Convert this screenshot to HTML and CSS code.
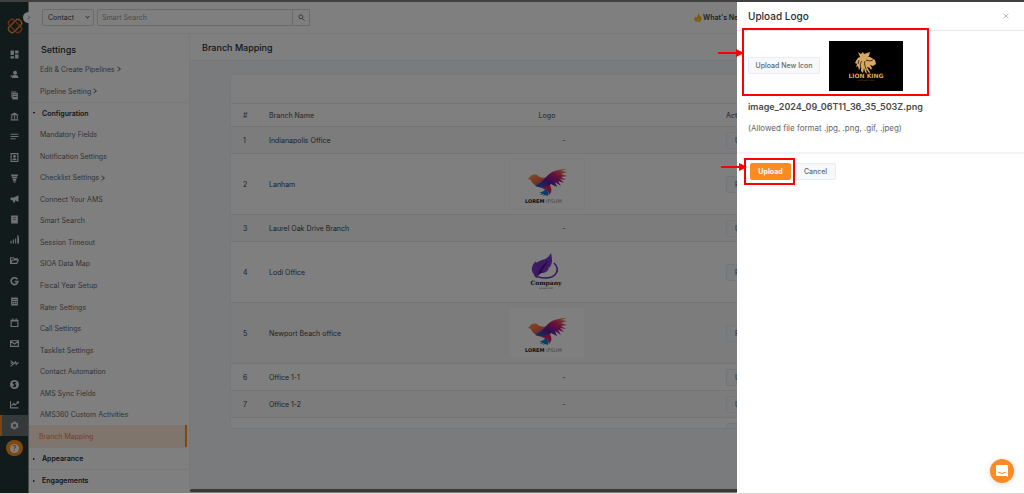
FILE: index.html
```html
<!DOCTYPE html>
<html lang="en">
<head>
    <meta charset="utf-8">
    <title>Branch Mapping</title>
    <link rel="stylesheet" href="styles.css">
</head>
<body>
    <svg class="defs" width="0" height="0">
        <defs>
            <linearGradient id="wing" x1="0" y1="1" x2="1" y2="0">
                <stop offset="0" stop-color="#0a6fd0"/>
                <stop offset="0.35" stop-color="#5a1fa0"/>
                <stop offset="0.65" stop-color="#d0207a"/>
                <stop offset="1" stop-color="#ffa030"/>
            </linearGradient>
            <linearGradient id="belly" x1="0" y1="0" x2="1" y2="1">
                <stop offset="0" stop-color="#ff9a3c"/>
                <stop offset="0.5" stop-color="#f06a50"/>
                <stop offset="1" stop-color="#2040b0"/>
            </linearGradient>
        </defs>
        <symbol id="bird" viewBox="0 0 74 50">
            <path fill="url(#belly)" d="M18 20l2-2c2-3 6-3 8-1 3 2 6 2 9 1l2 9-8 1c-5-1-9-3-10-7z"/>
            <path fill="url(#wing)" d="M25 27c4-2 8-5 12-10 5-5 11-7 20-7l-6 2 6 1-6 2 6 2-6 1 5 3-6-1 4 4-6-2 3 5-6-4 2 5-6-3c-3 4-8 5-16 2z"/>
            <path fill="#e01e5a" d="M32 28l8-2c2 4 2 7-1 10l-1-4-6-3z"/>
            <path fill="#0f7fd8" d="M36 29c2 3 3 5 2 8l-3-1-2 1 1-2-4 1 2-2-3 0c4-1 6-3 7-5z"/>
        </symbol>
    </svg>

    <div class="app">
        <aside class="sidebar">
            <a href="#" class="brand" aria-label="Home">
                <svg viewBox="0 0 16 16" fill="none" stroke-width="1.300">
                    <rect stroke="#f5a623" x="4.500" y="0.500" width="7" height="15" rx="3" transform="rotate(45 8 8)"/>
                    <rect stroke="#f0502a" x="4.500" y="0.500" width="7" height="15" rx="3" transform="rotate(-45 8 8)"/>
                </svg>
            </a>
            <nav class="side-nav">
                <a href="#" aria-label="Dashboard"><svg viewBox="0 0 16 16"><path d="M1 1h6v8H1zM9 1h6v5H9zM1 11h6v4H1zM9 8h6v7H9z"/></svg></a>
                <a href="#" aria-label="Contacts"><svg viewBox="0 0 16 16"><circle cx="9" cy="5" r="3.500"/><path d="M3 14c0-4 3-5 6-5s6 1 6 5zM1 13c0-3 1-4 3-4l-2 4z"/></svg></a>
                <a href="#" aria-label="Policies"><svg viewBox="0 0 16 16"><path d="M2 1h9v1H3v10H2zM4 3h10v12H4zm2 3v1h6V6zm0 3v1h6V9z" fill-rule="evenodd"/></svg></a>
                <a href="#" aria-label="Carriers"><svg viewBox="0 0 16 16"><path d="M8 1l7 4v1H1V5zM2 7h2v5H2zM7 7h2v5H7zM12 7h2v5h-2zM1 13h14v2H1z"/></svg></a>
                <a href="#" aria-label="Notes"><svg viewBox="0 0 16 16"><path d="M1 3h14v2H1zM1 7h14v2H1zM1 11h9v2H1z"/></svg></a>
                <a href="#" aria-label="Directory"><svg viewBox="0 0 16 16"><path fill-rule="evenodd" d="M1 0h14v16H1zM3 2v12h10V2z"/><circle cx="8" cy="6" r="2.500"/><path d="M4 13c0-5 8-5 8 0z"/></svg></a>
                <a href="#" aria-label="Pipeline"><svg viewBox="0 0 16 16"><path d="M2 1h12v3H2zM3 5h10l-1 3H4zM5 9h6v3H5zM6 13h4v2H6z"/></svg></a>
                <a href="#" aria-label="Campaigns"><svg viewBox="0 0 16 16"><path d="M1 6h6l8-4v12l-6-3v4H6l-1-4H1z"/></svg></a>
                <a href="#" aria-label="Documents"><svg viewBox="0 0 16 16"><path fill-rule="evenodd" d="M2 1h12v14H2zm3 3v1h6V4zm0 3v1h6V7z"/></svg></a>
                <a href="#" aria-label="Reports"><svg viewBox="0 0 16 16"><path d="M1 10h2v5H1zM5 8h2v7H5zM9 6h2v9H9zM13 4h3v11h-3z"/><circle cx="14" cy="2" r="1.500"/></svg></a>
                <a href="#" aria-label="Files"><svg viewBox="0 0 16 16" class="line"><path d="M1 13V3h5l2 2h5v2M1 13l3-6h11l-3 6z"/></svg></a>
                <a href="#" aria-label="Google"><svg viewBox="0 0 16 16" class="line google"><path d="M13 4A6 6 0 1 0 14 8H8"/></svg></a>
                <a href="#" aria-label="Calculator"><svg viewBox="0 0 16 16"><path fill-rule="evenodd" d="M2 1h12v14H2zm2 3v1h8V4zm0 3v2h2V7zm3 0v2h2V7zm3 0v2h2V7zm-6 3v2h2v-2zm3 0v2h2v-2zm3 0v2h2v-2z"/></svg></a>
                <a href="#" aria-label="Calendar"><svg viewBox="0 0 16 16" class="line"><path d="M2 4h12v11H2zM2 5h12M5 1v3M11 1v3"/></svg></a>
                <a href="#" aria-label="Mail"><svg viewBox="0 0 16 16" class="line"><path d="M1 3h14v10H1zM1 4l7 5 7-5"/></svg></a>
                <a href="#" aria-label="Signatures"><svg viewBox="0 0 16 16" class="line"><path d="M1 3l6 5-6 5M1 7l6 1 3-3 1 5 2-3h3"/></svg></a>
                <a href="#" aria-label="Billing"><svg viewBox="0 0 16 16"><circle cx="8" cy="8" r="8"/><path class="cut" d="M11 5C8 3 5 4 6 6s4 1 4 4-4 2-5 1M8 3v10"/></svg></a>
                <a href="#" aria-label="Analytics"><svg viewBox="0 0 16 16" class="line"><path d="M1 2v12h14M3 10l4-4 2 3 6-6M12 3h3v3"/></svg></a>
                <a href="#" class="active" aria-label="Settings"><svg viewBox="0 0 16 16"><path fill-rule="evenodd" d="M6 1h4l1 2 3 0 1 4-1 1 1 3-3 2-2 0-1 2H6l-1-2-3 0-1-4 1-1-1-3 3-2 1 0zM8 5a3 3 0 1 0 0 6 3 3 0 0 0 0-6z"/></svg></a>
            </nav>
            <div class="side-help">
                <a href="#" class="help" aria-label="Help"><span>?</span></a>
            </div>
        </aside>
        <button class="expand" aria-label="Expand menu">
            <svg viewBox="0 0 8 8"><path d="M3 1l3 3-3 3"/></svg>
        </button>

        <div class="page">
            <header class="topbar">
                <div class="type-wrap">
                    <select class="type" aria-label="Search type">
                        <option>Contact</option>
                    </select>
                    <i></i>
                </div>
                <input class="search" type="text" placeholder="Smart Search" aria-label="Smart Search">
                <button class="search-btn" aria-label="Search">
                    <svg viewBox="0 0 16 16" class="line"><path d="M11 6.500a4.500 4.500 0 1 1-9 0 4.500 4.500 0 0 1 9 0zM10 10l5 5"/></svg>
                </button>
                <a href="#" class="whats-new">
                    <svg viewBox="0 0 16 18"><path fill="#ffb400" d="M8 0c1 4 6 6 7 11 1 4-3 7-7 7s-8-2-7-7c0-2 1-3 2-4l1 3c3-2 4-6 4-10z"/><path fill="#ffd95a" d="M8 9c1 2 3 3 3 5s-1 3-3 3-4-1-3-4l1 1c1-1 2-3 2-5z"/></svg>
                    What's New
                </a>
            </header>

            <div class="body">
                <nav class="settings">
                    <h2>Settings</h2>
                    <a href="#" class="top">Edit &amp; Create Pipelines <i></i></a>
                    <a href="#" class="top">Pipeline Setting <i></i></a>
                    <a href="#" class="group open">Configuration</a>
                    <div class="items">
                        <a href="#">Mandatory Fields</a>
                        <a href="#">Notification Settings</a>
                        <a href="#">Checklist Settings <i></i></a>
                        <a href="#">Connect Your AMS</a>
                        <a href="#">Smart Search</a>
                        <a href="#">Session Timeout</a>
                        <a href="#">SIOA Data Map</a>
                        <a href="#">Fiscal Year Setup</a>
                        <a href="#">Rater Settings</a>
                        <a href="#">Call Settings</a>
                        <a href="#">Tasklist Settings</a>
                        <a href="#">Contact Automation</a>
                        <a href="#">AMS Sync Fields</a>
                        <a href="#">AMS360 Custom Activities</a>
                        <a href="#" class="active">Branch Mapping</a>
                    </div>
                    <a href="#" class="group">Appearance</a>
                    <a href="#" class="group">Engagements</a>
                </nav>

                <main class="content">
                    <h1>Branch Mapping</h1>
                    <div class="card">
                        <table>
                            <tr>
                                <th class="num">#</th>
                                <th class="name">Branch Name</th>
                                <th class="logo"><div class="logo-box">Logo</div></th>
                                <th>Action</th>
                            </tr>
                            <tr>
                                <td>1</td>
                                <td>Indianapolis Office</td>
                                <td><div class="no-logo">-</div></td>
                                <td><button class="btn">Upload</button></td>
                            </tr>
                            <tr class="tall">
                                <td>2</td>
                                <td>Lanham</td>
                                <td>
                                    <div class="logo-box pic">
                                        <svg viewBox="0 0 74 50">
                                            <use href="#bird" width="74" height="50"/>
                                            <text x="15" y="44" class="bird-text"><tspan class="bird-bold">LOREM</tspan> IPSUM</text>
                                        </svg>
                                    </div>
                                </td>
                                <td><button class="btn">Remove</button></td>
                            </tr>
                            <tr>
                                <td>3</td>
                                <td>Laurel Oak Drive Branch</td>
                                <td><div class="no-logo">-</div></td>
                                <td><button class="btn">Upload</button></td>
                            </tr>
                            <tr class="tall">
                                <td>4</td>
                                <td>Lodi Office</td>
                                <td>
                                    <div class="logo-box">
                                        <svg viewBox="0 0 74 50">
                                            <path fill="none" stroke="#6a2bb0" stroke-width="1.500" d="M27 15c-6 6-4 16 9 16 11 0 16-8 9-15"/>
                                            <path fill="#7a35c8" d="M25 27c-3-8 2-12 8-14 4-1 7-3 9-7 1 5 2 9-1 14l-2 1 1 1-3 3-3 1c-4 0-5 2-6 5-2-1-3-2-3-4z"/>
                                            <path fill="#471580" d="M29 29c0-6 5-10 10-16-2 6-5 9-7 11l2 1c-3 1-4 3-5 4z"/>
                                            <text x="37" y="38" text-anchor="middle" class="feather-text">Company</text>
                                            <text x="37" y="42" text-anchor="middle" class="feather-sub">SLOGAN HERE</text>
                                        </svg>
                                    </div>
                                </td>
                                <td><button class="btn">Remove</button></td>
                            </tr>
                            <tr class="tall">
                                <td>5</td>
                                <td>Newport Beach office</td>
                                <td>
                                    <div class="logo-box pic">
                                        <svg viewBox="0 0 74 50">
                                            <use href="#bird" width="74" height="50"/>
                                            <text x="15" y="44" class="bird-text"><tspan class="bird-bold">LOREM</tspan> IPSUM</text>
                                        </svg>
                                    </div>
                                </td>
                                <td><button class="btn">Remove</button></td>
                            </tr>
                            <tr>
                                <td>6</td>
                                <td>Office 1-1</td>
                                <td><div class="no-logo">-</div></td>
                                <td><button class="btn">Upload</button></td>
                            </tr>
                            <tr>
                                <td>7</td>
                                <td>Office 1-2</td>
                                <td><div class="no-logo">-</div></td>
                                <td><button class="btn">Upload</button></td>
                            </tr>
                            <tr>
                                <td>8</td>
                                <td>Office 2-1</td>
                                <td><div class="no-logo">-</div></td>
                                <td><button class="btn">Upload</button></td>
                            </tr>
                        </table>
                    </div>
                    <div class="scrollbar"></div>
                </main>
            </div>
        </div>
    </div>

    <div class="overlay"></div>

    <section class="drawer">
        <div class="drawer-head">
            <h2>Upload Logo</h2>
            <button class="close" aria-label="Close">
                <svg viewBox="0 0 10 10"><path d="M1 1l8 8M9 1l-8 8"/></svg>
            </button>
        </div>
        <div class="drawer-body">
            <div class="preview">
                <button class="btn">Upload New Icon</button>
                <svg class="lion" viewBox="0 0 74 50">
                    <rect width="74" height="50" fill="#000"/>
                    <path fill="#d9a860" d="M29 11l3 2 2-2 1 2 3-1 3-1-1 4-9 1zM28 18c2-3 9-4 13-2l5 3 1 4-3 2-3-1 2 3-1 2c-1-2-2-3-4-3l3 5-1 2c0-2-2-4-3-5l1 5-2-2-1-4-1 5-2-2 0-4-2 3-1-4-2 1 1-3-2-1z"/>
                    <path stroke="#000" stroke-width="0.700" fill="none" d="M37 19l4 1 3-1M33 20c-2 2-2 5-1 8M36 20c-1 3 0 5 1 8M30 19l-1 4"/>
                    <text x="37" y="37" text-anchor="middle" class="lion-text">LION KING</text>
                    <text x="37" y="40" text-anchor="middle" class="lion-sub">L U X U R I O U S</text>
                </svg>
                <span class="mark mark-icon"></span>
                <svg class="arrow arrow-icon" viewBox="0 0 26 8"><path d="M0 3h18V0l8 4-8 4V5H0z"/></svg>
            </div>
            <p class="file">image_2024_09_06T11_36_35_503Z.png</p>
            <p class="hint">(Allowed file format .jpg, .png, .gif, .jpeg)</p>
        </div>
        <div class="drawer-foot">
            <button class="btn primary">Upload</button>
            <button class="btn">Cancel</button>
            <span class="mark mark-upload"></span>
            <svg class="arrow arrow-upload" viewBox="0 0 26 8"><path d="M0 3h18V0l8 4-8 4V5H0z"/></svg>
        </div>
    </section>

    <button class="chat" aria-label="Open chat">
        <svg viewBox="0 0 12 12"><path fill="#fff" d="M1 0h10q1 0 1 1v11l-2-1H1q-1 0-1-1V1q0-1 1-1z"/><path fill="none" stroke="#fb8b24" d="M2 7q4 3 8 0"/></svg>
    </button>
</body>
</html>
```

FILE: styles.css
```css
* {
    box-sizing: border-box;
}

body {
    margin: 0;
    height: 100vh;
    overflow: hidden;
    border-top: 2px solid #808080;
    border-bottom: 1px solid #dddad6;
    font-family: Inter, "Open Sans", sans-serif;
    font-size: 7px;
    color: #3c4448;
    background-color: #fff;
}

a {
    color: inherit;
    text-decoration: none;
}

h1, h2, p {
    margin: 0;
}

button, select, input {
    font-family: inherit;
    font-size: 7px;
    color: inherit;
    margin: 0;
}

svg {
    display: block;
}

.defs {
    position: absolute;
}

.line {
    fill: none;
    stroke: currentColor;
    stroke-width: 2;
}

.app {
    display: flex;
    height: 100%;
}

/* dark icon bar */
.sidebar {
    width: 29px;
    flex: none;
    display: flex;
    flex-direction: column;
    background-color: #223638;
    border-right: 1px solid #8e9698;
}

.brand {
    height: 42px;
    padding: 16px 0 0 7px;
}

.brand svg {
    width: 16px;
    height: 16px;
}

.side-nav {
    flex: 1;
    display: flex;
    flex-direction: column;
}

.side-nav a {
    flex: 1;
    display: flex;
    align-items: center;
    justify-content: center;
    color: #dfe3e5;
}

.side-nav a.active {
    background-color: #6a7274;
    border-left: 2px solid #fb8b24;
    padding-right: 2px;
}

.side-nav svg {
    width: 9px;
    height: 9px;
}

.side-nav svg:not(.line) {
    fill: currentColor;
}

.side-nav .google {
    stroke-width: 3;
}

.side-nav .cut {
    fill: none;
    stroke: #223638;
    stroke-width: 2;
}

.side-help {
    height: 57px;
    padding: 4px 0 0 6px;
}

.help {
    display: flex;
    align-items: center;
    justify-content: center;
    width: 17px;
    height: 16px;
    border-radius: 8px;
    background-color: #ff9020;
}

.help span {
    width: 9px;
    height: 9px;
    border-radius: 50%;
    line-height: 9px;
    text-align: center;
    font-weight: 700;
    color: #e07810;
    background-color: #fff;
}

.expand {
    position: absolute;
    left: 23px;
    top: 12px;
    width: 11px;
    height: 11px;
    padding: 3px;
    border: none;
    border-radius: 50%;
    background-color: #fff;
}

.expand svg {
    width: 5px;
    height: 5px;
    fill: none;
    stroke: #555;
}

/* top bar */
.page {
    flex: 1;
    min-width: 0;
    display: flex;
    flex-direction: column;
}

.topbar {
    display: flex;
    align-items: center;
    height: 32px;
    padding-left: 13px;
    border-bottom: 1px solid #f0f1f4;
}

.type, .search, .search-btn {
    height: 17px;
    border: 1px solid #d4d6da;
    border-radius: 2px;
    background-color: #fff;
}

.type-wrap {
    position: relative;
    margin-right: 3px;
}

.type {
    display: block;
    width: 52px;
    padding: 0 5px;
    appearance: none;
}

.type-wrap i {
    position: absolute;
    right: 5px;
    top: 6px;
    width: 3px;
    height: 3px;
    border-right: 1px solid #777;
    border-bottom: 1px solid #777;
    transform: rotate(45deg);
}

.search {
    width: 196px;
    padding: 0 4px;
    border-radius: 2px 0 0 2px;
}

.search::placeholder {
    color: #96999d;
}

.search-btn {
    width: 18px;
    margin-left: -1px;
    padding: 0 5px;
    border-radius: 0;
    color: #666;
}

.search-btn svg {
    width: 7px;
    height: 7px;
}

.whats-new {
    display: flex;
    align-items: center;
    gap: 1px;
    margin-left: 384px;
    font-weight: 600;
    white-space: nowrap;
}

.whats-new svg {
    width: 8px;
    height: 9px;
}

.body {
    flex: 1;
    min-height: 0;
    display: flex;
}

/* settings menu */
.settings {
    flex: none;
    width: 161px;
    display: flex;
    flex-direction: column;
    padding: 0 2px 2px 0;
    border-right: 1px solid #f0f1f4;
    color: #63696d;
}

.settings h2 {
    height: 24px;
    padding: 5px 0 0 12px;
    line-height: 22px;
    font-size: 9px;
    font-weight: 500;
    color: #1f2d33;
}

.settings a {
    display: flex;
    align-items: center;
    padding-left: 11px;
}

.settings i {
    width: 4px;
    height: 4px;
    margin-left: 1px;
    border-top: 1px solid #7d8387;
    border-right: 1px solid #7d8387;
    transform: rotate(45deg);
}

.settings .top, .settings .group {
    height: 22px;
}

.settings .group {
    padding-left: 4px;
    border-top: 1px solid #eceef0;
    font-weight: 600;
    color: #1f2d33;
}

.group::before {
    content: "";
    margin-right: 6px;
    border: 1px solid transparent;
    border-left: 2px solid #000;
}

.group.open::before {
    border: 1px solid transparent;
    border-top: 2px solid #000;
    margin-right: 7px;
}

.items {
    flex: 1;
    display: flex;
    flex-direction: column;
}

.items a {
    flex: 1;
}

.settings .items .active {
    padding-left: 10px;
    color: #ff7a40;
    background-color: #ffeada;
    border-right: 2px solid #ff9020;
}

/* branch table */
.content {
    flex: 1;
    min-width: 0;
    display: flex;
    flex-direction: column;
    background-color: #f4f6fa;
}

h1 {
    height: 27px;
    padding-left: 12px;
    line-height: 27px;
    font-size: 9px;
    font-weight: 500;
    color: #1f2d33;
    background-color: #fff;
    border-bottom: 1px solid #eceef2;
}

.card {
    height: 355px;
    margin: 13px 40px 0;
    padding-top: 28px;
    overflow: hidden;
    background-color: #fff;
    border: 1px solid #eceef2;
}

table {
    width: 100%;
    table-layout: fixed;
    border-collapse: collapse;
}

th, td {
    height: 27px;
    padding: 0 8px;
    text-align: left;
    border-top: 1px solid #e8eaee;
}

th {
    height: 23px;
    font-weight: 500;
    color: #63696d;
}

th.num {
    width: 30px;
}

td:first-child, th.num {
    padding-left: 12px;
}

th.name {
    width: 240px;
}

th.logo {
    width: 217px;
}

/* odd branches are shaded */
tr:nth-child(2) td, tr:nth-child(4) td, tr:nth-child(6) td, tr:nth-child(8) td {
    background-color: #f9f9f9;
}

.tall td {
    height: 61px;
}

.logo-box {
    width: 76px;
    text-align: center;
}

.logo-box svg {
    width: 74px;
    height: 50px;
}

.pic {
    border: 1px solid #f8f8f8;
    background-color: #fff;
}

.no-logo {
    width: 110px;
    text-align: center;
}

.bird-text {
    font: 5px "DejaVu Sans", sans-serif;
    fill: #888;
}

.bird-bold {
    font-weight: 700;
    fill: #222;
}

.feather-text {
    font: 700 6px "DejaVu Serif", serif;
    fill: #222;
}

.feather-sub {
    font: 2px "DejaVu Sans", sans-serif;
    fill: #666;
}

.btn {
    height: 17px;
    padding: 0 8px;
    border: 1px solid #e9edf2;
    border-radius: 2px;
    font-weight: 500;
    color: #63696d;
    background-color: #f7f8fa;
}

.scrollbar {
    height: 3px;
    margin: auto 0 1px;
    border-radius: 2px;
    background-color: #707070;
}

.overlay {
    position: fixed;
    inset: 0 0 1px;
    background-color: rgba(0, 0, 0, 0.5);
}

/* upload drawer */
.drawer {
    position: fixed;
    top: 2px;
    right: 0;
    bottom: 1px;
    width: 287px;
    background-color: #fff;
}

.drawer-head {
    display: flex;
    align-items: center;
    justify-content: space-between;
    height: 29px;
    padding: 0 15px 0 11px;
    border-bottom: 1px solid #ebebeb;
}

.drawer-head h2 {
    font-size: 10px;
    font-weight: 500;
    color: #1f2d33;
}

.close {
    padding: 0;
    border: none;
    background: none;
}

.close svg {
    width: 6px;
    height: 6px;
    fill: none;
    stroke: #888;
}

.drawer-body {
    height: 123px;
    padding: 9px 11px 0;
    border-bottom: 2px solid #f3f3f3;
}

.preview {
    position: relative;
    display: flex;
    align-items: center;
    gap: 9px;
    height: 51px;
}

.preview .btn {
    width: 72px;
    padding: 0;
}

.lion {
    width: 74px;
    height: 50px;
}

.lion-text {
    font: 700 6px "DejaVu Sans", sans-serif;
    fill: #d9a860;
}

.lion-sub {
    font: 2px "DejaVu Sans", sans-serif;
    fill: #a07a40;
}

.file {
    margin-top: 10px;
    line-height: 12px;
    font-size: 9px;
    font-weight: 600;
    color: #4a4a4a;
}

.hint {
    margin-top: 9px;
    line-height: 12px;
    font-size: 8px;
    color: #666;
}

.drawer-foot {
    position: relative;
    display: flex;
    gap: 4px;
    padding: 9px 13px;
}

.drawer-foot .btn {
    width: 41px;
    padding: 0;
}

.drawer-foot .primary {
    font-weight: 700;
    color: #fff;
    background-color: #f98b20;
    border-color: #f98b20;
}

/* callouts */
.mark {
    position: absolute;
    border: 2px solid #fe0000;
}

.mark-icon {
    left: -6px;
    top: -12px;
    width: 187px;
    height: 68px;
}

.mark-upload {
    left: 7px;
    top: 4px;
    width: 51px;
    height: 27px;
}

.arrow {
    position: absolute;
    width: 26px;
    height: 8px;
    fill: #fe0000;
}

.arrow-icon {
    left: -30px;
    top: 9px;
}

.arrow-upload {
    left: -16px;
    top: 9px;
}

.chat {
    position: fixed;
    right: 10px;
    bottom: 11px;
    width: 24px;
    height: 24px;
    padding: 6px;
    border: none;
    border-radius: 50%;
    background-color: #fb8b24;
    box-shadow: 0 1px 6px rgba(0, 0, 0, 0.15);
}

.chat svg {
    width: 12px;
    height: 12px;
}
```
